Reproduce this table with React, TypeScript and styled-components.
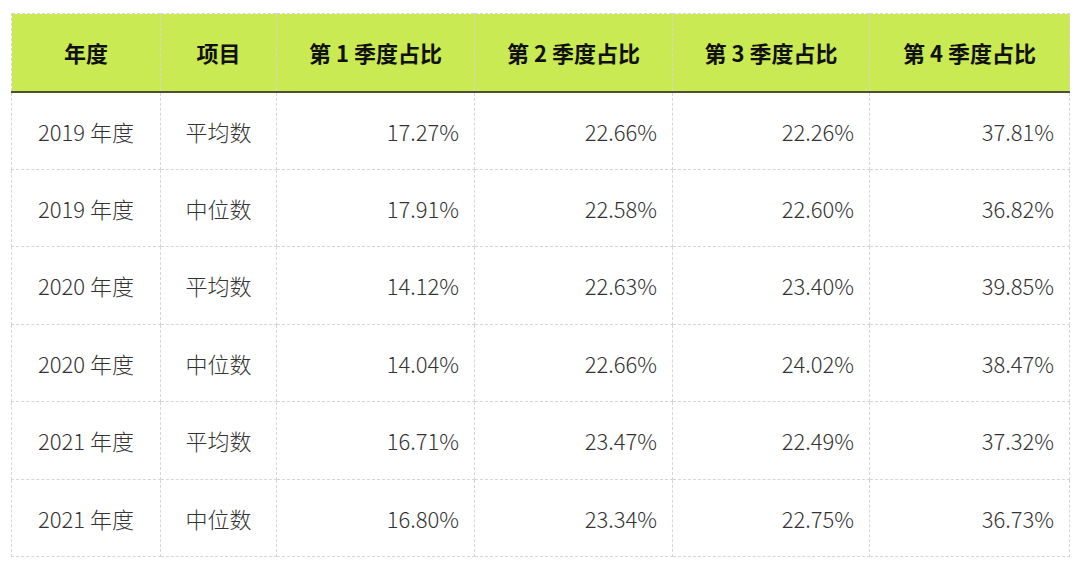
import styled, { createGlobalStyle } from "styled-components";

const GlobalStyle = createGlobalStyle`
    body {
        margin: 0;
        background: #ffffff;
        font-family: "Noto Sans CJK SC", "Noto Sans", sans-serif;
    }
`;

type cellProps = {
    align?: string;
}

export const Page = styled.div`
    width: 1080px;
    height: 565px;
    padding: 13px 0 0 11px;
    box-sizing: border-box;
`;

export const Table = styled.table`
    width: 1058px;
    border-collapse: collapse;
    table-layout: fixed;
    border: 1px dashed #d6d6d6;
`;

export const HeadCell = styled.th`
    height: 78px;
    padding: 0;
    background-color: #c9ea52;
    border-left: 1px dashed #d6d6d6;
    border-bottom: 2px solid #4d5030;
    color: #111111;
    font-size: 22px;
    font-weight: 700;
    text-align: center;
    box-sizing: border-box;
`;

export const Cell = styled.td<cellProps>`
    height: 77.5px;
    padding: 0 15px;
    border: 1px dashed #d6d6d6;
    color: #333333;
    font-size: 22px;
    font-weight: 300;
    text-align: ${(props) => props.align || "center"};
    box-sizing: border-box;
`;

const columns = [
    { title: "年度", width: 149 },
    { title: "项目", width: 116 },
    { title: "第 1 季度占比", width: 198 },
    { title: "第 2 季度占比", width: 198 },
    { title: "第 3 季度占比", width: 197 },
    { title: "第 4 季度占比", width: 200 },
];

const rows = [
    ["2019 年度", "平均数", "17.27%", "22.66%", "22.26%", "37.81%"],
    ["2019 年度", "中位数", "17.91%", "22.58%", "22.60%", "36.82%"],
    ["2020 年度", "平均数", "14.12%", "22.63%", "23.40%", "39.85%"],
    ["2020 年度", "中位数", "14.04%", "22.66%", "24.02%", "38.47%"],
    ["2021 年度", "平均数", "16.71%", "23.47%", "22.49%", "37.32%"],
    ["2021 年度", "中位数", "16.80%", "23.34%", "22.75%", "36.73%"],
];

export default function App() {
    return (
        <Page>
            <GlobalStyle />
            <Table>
                <colgroup>
                    {columns.map((c) => (
                        <col key={c.title} style={{ width: c.width }} />
                    ))}
                </colgroup>
                <thead>
                    <tr>
                        {columns.map((c) => (
                            <HeadCell key={c.title}>{c.title}</HeadCell>
                        ))}
                    </tr>
                </thead>
                <tbody>
                    {rows.map((r, i) => (
                        <tr key={i}>
                            {r.map((v, j) => (
                                <Cell key={j} align={j < 2 ? "center" : "right"}>
                                    {v}
                                </Cell>
                            ))}
                        </tr>
                    ))}
                </tbody>
            </Table>
        </Page>
    );
}
